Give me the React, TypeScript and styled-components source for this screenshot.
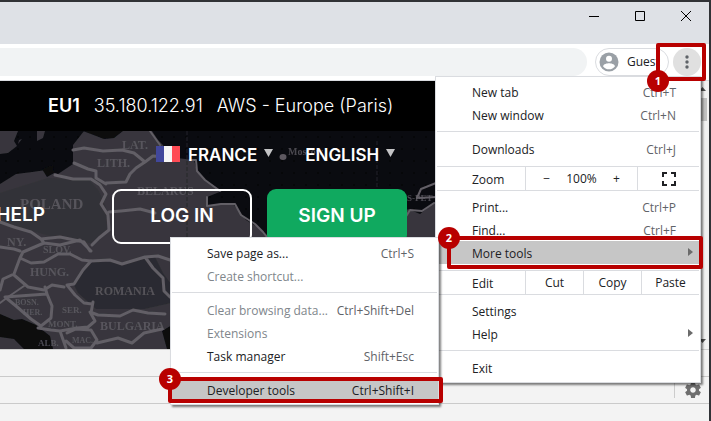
import React from "react";
import styled, { createGlobalStyle, css } from "styled-components";

const GlobalStyle = createGlobalStyle`
  * { box-sizing: border-box; }
  body { margin: 0; overflow: hidden; background: #25272b; }
  button { font: inherit; color: inherit; margin: 0; padding: 0; border: 0; background: none; cursor: pointer; }
`;

const red = "#b80000";
const line = "#dadce0";

const Desktop = styled.div`
  min-height: 100vh;
  display: flex;
  padding: 2px 2px 0 0;
  background: #303236;
  font: 12px/23px "Open Sans", "Noto Sans", sans-serif;
  color: #202124;
`;

const BrowserWindow = styled.div`
  flex: 1;
  min-width: 0;
  display: flex;
  flex-direction: column;
  background: #f3f3f3;
`;

const TitleBar = styled.header`
  display: flex;
  justify-content: flex-end;
  height: 42px;
  background: #dee1e6;
`;

const WindowButton = styled.button`
  width: 46px;
  height: 28px;
  display: grid;
  place-items: center;
`;

const Toolbar = styled.div`
  position: relative;
  display: flex;
  align-items: center;
  height: 37px;
  padding: 0 8px 1px 0;
  background: #fff;
  border-bottom: 1px solid ${line};
`;

const AddressBar = styled.input`
  flex: 1;
  min-width: 0;
  height: 28px;
  margin-right: 8px;
  padding: 0 14px;
  border: 0;
  border-radius: 0 14px 14px 0;
  background: #f1f3f4;
  font: inherit;
`;

const ProfileChip = styled.button`
  display: flex;
  align-items: center;
  width: 74px;
  height: 28px;
  margin-right: 4px;
  padding-left: 3px;
  gap: 8px;
  border: 1px solid ${line};
  border-radius: 14px;
  background: #fff;
`;

const MenuAnchor = styled.div`
  position: relative;
  height: 28px;
`;

const KebabButton = styled.button`
  display: grid;
  place-items: center;
  width: 28px;
  height: 28px;
  border-radius: 50%;
  background: #e0e0e0;
`;

type Edges = { $top: number; $right: number; $bottom: number; $left: number };

const CalloutFrame = styled.div<Edges>`
  position: absolute;
  top: ${(p) => p.$top}px;
  right: ${(p) => p.$right}px;
  bottom: ${(p) => p.$bottom}px;
  left: ${(p) => p.$left}px;
  z-index: 5;
  border: 4px solid ${red};
  border-radius: 2px;
  pointer-events: none;
`;

const CalloutBadge = styled.span<{ $corner: "top" | "bottom" }>`
  position: absolute;
  left: -13px;
  ${(p) => (p.$corner === "top" ? "top: -13px;" : "bottom: -15px;")}
  width: 22px;
  height: 22px;
  border-radius: 50%;
  background: ${red};
  color: #fff;
  font-size: 11px;
  font-weight: 700;
  line-height: 22px;
  text-align: center;
`;

const menuSurface = css`
  position: absolute;
  z-index: 3;
  margin: 0;
  padding: 3px 0;
  list-style: none;
  background: #fff;
  border: 1px solid ${line};
  box-shadow: 2px 2px 2px rgba(0, 0, 0, 0.5);
`;

const MainMenu = styled.ul`
  ${menuSurface}
  top: 28px;
  right: 0;
  width: 266px;
`;

const SubMenu = styled.ul`
  ${menuSurface}
  top: -4px;
  right: 261px;
  width: 269px;
`;

const MenuEntry = styled.li`
  position: relative;
`;

const MenuButton = styled.button<{ $active?: boolean; $dim?: boolean }>`
  display: flex;
  align-items: center;
  justify-content: space-between;
  width: 100%;
  height: 23px;
  padding: 2px 24px 0 36px;
  background: ${(p) => (p.$active ? "#c6c6c6" : "transparent")};
  color: ${(p) => (p.$dim ? "#80868b" : "#202124")};
  white-space: nowrap;
`;

const Shortcut = styled.span<{ $dark?: boolean }>`
  color: ${(p) => (p.$dark ? "#202124" : "#5f6368")};
`;

const SubmenuArrow = styled.svg`
  display: block;
  margin: 0 -17px 2px 0;
`;

const Separator = styled.li`
  height: 1px;
  margin: 5px 1px;
  background: ${line};
`;

const ControlRow = styled.li<{ $columns: string }>`
  display: grid;
  grid-template-columns: ${(p) => p.$columns};
  height: 25px;
  margin: 6px 1px 4px;
  border: solid ${line};
  border-width: 1px 0;
`;

const ControlLabel = styled.span`
  padding: 1px 0 0 35px;
`;

const ControlCell = styled.div`
  display: flex;
  justify-content: space-around;
  padding: 0 1px;
  border-left: 1px solid ${line};
`;

const ControlButton = styled.button`
  flex: 1;
  display: grid;
  place-items: center;
`;

const Viewport = styled.main`
  display: flex;
  height: 268px;
`;

const Site = styled.div`
  flex: 1;
  min-width: 0;
  display: flex;
  flex-direction: column;
  overflow: hidden;
  color: #fff;
  font-family: Inter, "Open Sans", sans-serif;
  white-space: nowrap;
`;

const ServerBar = styled.div`
  display: flex;
  align-items: center;
  gap: 14px;
  height: 50px;
  padding: 0 0 2px 48px;
  background: #000;
  font-size: 18px;
  font-weight: 300;
`;

const ServerName = styled.strong`
  font-weight: 600;
`;

const Hero = styled.section`
  position: relative;
  flex: 1;
  background: #0a0b10;
`;

const MapArt = styled.svg`
  position: absolute;
  top: 0;
  left: 0;
`;

const HeroContent = styled.div`
  position: relative;
  font-weight: 600;
`;

const LocaleBar = styled.div`
  display: flex;
  align-items: center;
  gap: 32px;
  height: 49px;
  padding-left: 156px;
  font-size: 17px;
`;

const LocaleButton = styled.button`
  display: flex;
  align-items: center;
`;

const Flag = styled.svg`
  margin: 0 8px 4px 0;
`;

const Caret = styled.svg`
  margin: 0 0 5px 7px;
`;

const AccountBar = styled.nav`
  display: flex;
  align-items: center;
  margin-top: 9px;
  font-size: 19px;
`;

const HelpLink = styled.a`
  display: flex;
  justify-content: flex-end;
  width: 45px;
  padding-bottom: 4px;
  margin-right: 67px;
  color: #fff;
  text-decoration: none;
`;

const AccountButton = styled.button<{ $solid?: boolean }>`
  width: 140px;
  height: 55px;
  margin-right: 15px;
  padding-bottom: 3px;
  border: ${(p) => (p.$solid ? "0" : "2px solid #fff")};
  border-radius: 9px;
  background: ${(p) => (p.$solid ? "#10a95f" : "transparent")};
`;

const Scrollbar = styled.div`
  display: flex;
  flex-direction: column;
  justify-content: space-between;
  width: 17px;
  padding: 0 2px;
  background: #f1f1f1;
`;

const ScrollThumb = styled.div`
  flex: 0 0 23px;
  margin-bottom: auto;
  background: #c1c1c1;
`;

const ScrollArrow = styled.svg`
  display: block;
`;

const DevTools = styled.section`
  flex: 1;
  border-top: 1px solid #d0d0d0;
  background: #f3f3f3;
`;

const DevToolsBar = styled.div`
  display: flex;
  align-items: center;
  justify-content: flex-end;
  height: 27px;
  padding-right: 8px;
  border-bottom: 1px solid #cacaca;
`;

const SettingsButton = styled.button`
  display: flex;
  padding-left: 10px;
  border-left: 1px solid #ccc;
`;

function Callout({ n, corner = "top", edges }: { n: number; corner?: "top" | "bottom"; edges: [number, number, number, number] }) {
  const [top, right, bottom, left] = edges;
  return (
    <CalloutFrame $top={top} $right={right} $bottom={bottom} $left={left}>
      <CalloutBadge $corner={corner}>{n}</CalloutBadge>
    </CalloutFrame>
  );
}

type ItemProps = {
  label: string;
  shortcut?: string;
  dim?: boolean;
  active?: boolean;
  arrow?: boolean;
  children?: React.ReactNode;
};

function Item({ label, shortcut, dim, active, arrow, children }: ItemProps) {
  return (
    <MenuEntry>
      <MenuButton $active={active} $dim={dim}>
        <span>{label}</span>
        {shortcut && <Shortcut $dark={active}>{shortcut}</Shortcut>}
        {arrow && (
          <SubmenuArrow width="5" height="8" viewBox="0 0 5 8">
            <path d="M0 0 5 4 0 8Z" fill="#6b6b6b" />
          </SubmenuArrow>
        )}
      </MenuButton>
      {children}
    </MenuEntry>
  );
}

function EuropeMap() {
  return (
    <MapArt width="436" height="218" viewBox="0 0 436 218" aria-hidden="true">
      <defs>
        <filter id="soft" x="-5%" y="-5%" width="110%" height="110%">
          <feGaussianBlur stdDeviation="0.7" />
        </filter>
        <pattern id="dots" width="12" height="12" patternUnits="userSpaceOnUse">
          <rect x="5" y="5" width="2" height="2" fill="#060709" />
        </pattern>
      </defs>
      <rect width="436" height="218" fill="#0a0b10" />
      <rect width="436" height="218" fill="url(#dots)" />
      <g filter="url(#soft)">
        <g fill="#37363c">
          <path d="M0 0H18L14 10 17 15 8 22 0 23ZM37 0H45L43 7 37 10ZM19 9 22 8 18 13Z" />
          <path d="M84 0H152L158 9 163 14 168 26 194 29 197 40 205 49 216 56 222 60 207 66 208 75 219 73 232 72 240 81 246 89 259 97 267 104 280 112V218H0V53L16 43 32 41 46 39 58 43 73 33 73 14Z" />
          <path d="M398 90 408 78 420 83 436 70V109H404Z" />
        </g>
        <g fill="#0a0b10">
          <path d="M83 0H123L114 7 104 8 91 3ZM0 183 14 189 22 188 36 194 50 205 53 218H24L14 208 0 206Z" />
          <path d="M162 200 172 194 190 187V218H167ZM42 38 53 34 54 42 47 46Z" />
        </g>
        <g fill="#2b2b30">
          <path d="M73 152 83 139 91 130 122 132 155 126 163 142 171 153V172L144 178 96 178 78 162Z" />
          <path d="M0 62 48 47 89 49 99 60 106 77 107 99 91 112 60 108 36 101 0 93Z" opacity=".3" />
        </g>
        <g fill="none" stroke="#625e66" strokeWidth="3" strokeLinejoin="round" strokeLinecap="round">
          <path d="M73 19 84 17 103 20 122 19 134 22 145 31 153 25 165 26M145 31 136 37 130 43 126 51 106 52M74 32 88 38 96 40 96 47 106 53M55 44 73 48 91 48 100 54 106 63 101 73 108 84 109 99 99 107 92 114M109 81 121 80 140 78 155 82" />
          <path d="M0 91 14 96 31 101 41 108 44 112M41 108 60 106 84 111 90 120M44 112 60 114 80 109 91 120M44 112 23 121 20 127 31 132 44 131 58 123 70 123 82 129 91 130M0 116 14 118 20 120M20 127 14 143 3 148 0 159M14 144 28 156 44 159 52 154 64 156M91 130 83 139 74 153 67 154 75 164 84 172 92 173" />
          <path d="M91 130 110 129 122 133 145 126 158 125 170 129M145 126 153 137 163 147 164 160 170 166M5 166 47 163 52 175 51 187 41 195 31 188 16 175 5 166M47 163 45 156M38 197 51 199 60 200 66 217M60 200 77 197 88 196 95 190 90 181 98 184 120 185 133 179 148 182 165 183M93 171 91 182M67 202 76 198 91 199 97 209 91 217H74L66 210M97 212 118 207 132 212 144 202 162 198" />
          <path strokeWidth="2" d="M0 172 8 166 24 155M150 0 155 7 160 14M190 29 196 29 197 40 205 49 220 60M207 66 207 75 221 73 235 73 241 84 255 93 263 101 270 110M402 92 410 79 422 80 434 72M417 67 421 58 436 52M419 67 436 66" />
        </g>
        <g fill="#66636b" fontFamily="Liberation Serif, serif" fontSize="12" fontWeight="700" opacity=".7">
          <text x="122" y="18" fontSize="12">LAT.</text>
          <text x="97" y="36" fontSize="12">LITH.</text>
          <text x="20" y="78" fontSize="15">POLAND</text>
          <text x="137" y="64">BELARUS</text>
          <text x="7" y="115">NY.</text>
          <text x="43" y="122" fontSize="10">SLOV.</text>
          <text x="30" y="145">HUNG.</text>
          <text x="95" y="164">ROMANIA</text>
          <text x="15" y="174" fontSize="8">BOSN.</text>
          <text x="23" y="184" fontSize="8">HER.</text>
          <text x="62" y="182" fontSize="9">SER.</text>
          <text x="48" y="196" fontSize="9">MONT.</text>
          <text x="100" y="199">BULGARIA</text>
          <text x="72" y="212" fontSize="8">MAC.</text>
          <text x="38" y="215" fontSize="9">ALB.</text>
          <text x="288" y="24" fontSize="10">Moscow</text>
          <text x="407" y="70" fontSize="9">S-PET</text>
        </g>
        <ellipse cx="283" cy="26" rx="3.5" ry="3" fill="#5d5960" />
        <path d="M187 0V110M377 10V60" stroke="#24242b" strokeDasharray="4 2" />
      </g>
    </MapArt>
  );
}

function CaretIcon() {
  return (
    <Caret width="9" height="8" viewBox="0 0 9 8">
      <path d="M0 0H9L4.5 8Z" fill="#c4c4c6" />
    </Caret>
  );
}

export default function App() {
  return (
    <>
      <GlobalStyle />
      <Desktop>
        <BrowserWindow>
          <TitleBar>
            <WindowButton aria-label="Minimize">
              <svg width="10" height="10"><path d="M0 5.5H10" stroke="#000" /></svg>
            </WindowButton>
            <WindowButton aria-label="Maximize">
              <svg width="10" height="10"><path d="M.5 .5H9.5V9.5H.5Z" fill="none" stroke="#000" /></svg>
            </WindowButton>
            <WindowButton aria-label="Close">
              <svg width="10" height="10"><path d="M0 0 10 10M10 0 0 10" stroke="#000" /></svg>
            </WindowButton>
          </TitleBar>

          <Toolbar>
            <AddressBar aria-label="Address and search bar" />
            <ProfileChip>
              <svg width="20" height="20" viewBox="0 0 20 20">
                <circle cx="10" cy="10" r="9.5" fill="#9aa0a6" />
                <circle cx="10" cy="6.7" r="3" fill="#fff" />
                <path d="M4 14.2C4.6 11.9 8 11.2 10 11.2S15.400 11.900 16 14.200C14.700 16.200 12.500 17.300 10 17.300S5.300 16.200 4 14.200Z" fill="#fff" />
              </svg>
              Guest
            </ProfileChip>
            <MenuAnchor>
              <KebabButton aria-label="Customize and control">
                <svg width="4" height="14" viewBox="0 0 4 14" fill="#5f6368">
                  <circle cx="2" cy="2" r="1.700" /><circle cx="2" cy="7" r="1.700" /><circle cx="2" cy="12" r="1.700" />
                </svg>
              </KebabButton>
              <MainMenu>
                <Item label="New tab" shortcut="Ctrl+T" />
                <Item label="New window" shortcut="Ctrl+N" />
                <Separator />
                <Item label="Downloads" shortcut="Ctrl+J" />
                <ControlRow $columns="1fr 112px 62px">
                  <ControlLabel>Zoom</ControlLabel>
                  <ControlCell>
                    <ControlButton aria-label="Zoom out">−</ControlButton>
                    <span>100%</span>
                    <ControlButton aria-label="Zoom in">+</ControlButton>
                  </ControlCell>
                  <ControlCell>
                    <ControlButton aria-label="Full screen">
                      <svg width="14" height="14" viewBox="0 0 14 14">
                        <path d="M1 5V1H5M9 1H13V5M13 9V13H9M5 13H1V9" fill="none" stroke="#202124" strokeWidth="2" />
                      </svg>
                    </ControlButton>
                  </ControlCell>
                </ControlRow>
                <Item label="Print..." shortcut="Ctrl+P" />
                <Item label="Find..." shortcut="Ctrl+F" />
                <Item label="More tools" active arrow>
                  <SubMenu>
                    <Item label="Save page as..." shortcut="Ctrl+S" />
                    <Item label="Create shortcut..." dim />
                    <Separator />
                    <Item label="Clear browsing data..." shortcut="Ctrl+Shift+Del" dim />
                    <Item label="Extensions" dim />
                    <Item label="Task manager" shortcut="Shift+Esc" />
                    <Separator />
                    <Item label="Developer tools" shortcut="Ctrl+Shift+I" active>
                      <Callout n={3} edges={[-1, -5, -2, -3]} />
                    </Item>
                  </SubMenu>
                  <Callout n={2} edges={[-5, -3, -5, 11]} />
                </Item>
                <ControlRow $columns="1fr 58px 58px 58px">
                  <ControlLabel>Edit</ControlLabel>
                  <ControlCell><ControlButton>Cut</ControlButton></ControlCell>
                  <ControlCell><ControlButton>Copy</ControlButton></ControlCell>
                  <ControlCell><ControlButton>Paste</ControlButton></ControlCell>
                </ControlRow>
                <Item label="Settings" />
                <Item label="Help" arrow />
                <Separator />
                <Item label="Exit" />
              </MainMenu>
              <Callout n={1} corner="bottom" edges={[-5, -5, -5, -17]} />
            </MenuAnchor>
          </Toolbar>

          <Viewport>
            <Site>
              <ServerBar>
                <ServerName>EU1</ServerName>
                <span>35.180.122.91</span>
                <span>AWS - Europe (Paris)</span>
              </ServerBar>
              <Hero>
                <EuropeMap />
                <HeroContent>
                  <LocaleBar>
                    <LocaleButton>
                      <Flag width="24" height="16" viewBox="0 0 24 16">
                        <path d="M0 0H8V16H0Z" fill="#41479b" />
                        <path d="M8 0H16V16H8Z" fill="#f5f5f5" />
                        <path d="M16 0H24V16H16Z" fill="#ff4b55" />
                      </Flag>
                      FRANCE
                      <CaretIcon />
                    </LocaleButton>
                    <LocaleButton>
                      ENGLISH
                      <CaretIcon />
                    </LocaleButton>
                  </LocaleBar>
                  <AccountBar>
                    <HelpLink href="#help">HELP</HelpLink>
                    <AccountButton>LOG IN</AccountButton>
                    <AccountButton $solid>SIGN UP</AccountButton>
                  </AccountBar>
                </HeroContent>
              </Hero>
            </Site>
            <Scrollbar>
              <ScrollArrow width="17" height="17"><path d="M5 10H12L8.500 6Z" fill="#505050" /></ScrollArrow>
              <ScrollThumb />
              <ScrollArrow width="17" height="17"><path d="M5 7H12L8.500 11Z" fill="#505050" /></ScrollArrow>
            </Scrollbar>
          </Viewport>

          <DevTools>
            <DevToolsBar />
            <DevToolsBar>
              <SettingsButton aria-label="Settings">
                <svg width="16" height="16" viewBox="2 2 20 20" fill="#6e6e6e">
                  <path d="M19.430 12.980c.04-.32.07-.64.07-.98s-.03-.66-.07-.98l2.110-1.650c.19-.15.24-.42.12-.64l-2-3.460c-.12-.22-.39-.3-.61-.22l-2.490 1c-.52-.4-1.080-.73-1.690-.98l-.38-2.650C14.460 2.180 14.250 2 14 2h-4c-.25 0-.46.18-.49.42l-.38 2.650c-.61.25-1.170.59-1.690.98l-2.490-1c-.23-.09-.49 0-.61.22l-2 3.460c-.13.22-.07.49.12.64l2.110 1.650c-.04.32-.07.65-.07.98s.03.66.07.98l-2.110 1.650c-.19.15-.24.42-.12.64l2 3.460c.12.22.39.3.61.22l2.490-1c.52.4 1.080.73 1.690.98l.38 2.650c.03.24.24.42.49.42h4c.25 0 .46-.18.49-.42l.38-2.650c.61-.25 1.170-.59 1.690-.98l2.490 1c.23.09.49 0 .61-.22l2-3.460c.12-.22.07-.49-.12-.64l-2.110-1.650zM12 15.500c-1.930 0-3.500-1.570-3.500-3.500s1.570-3.500 3.500-3.500 3.500 1.570 3.500 3.500-1.570 3.500-3.500 3.500z" />
                </svg>
              </SettingsButton>
            </DevToolsBar>
          </DevTools>
        </BrowserWindow>
      </Desktop>
    </>
  );
}
